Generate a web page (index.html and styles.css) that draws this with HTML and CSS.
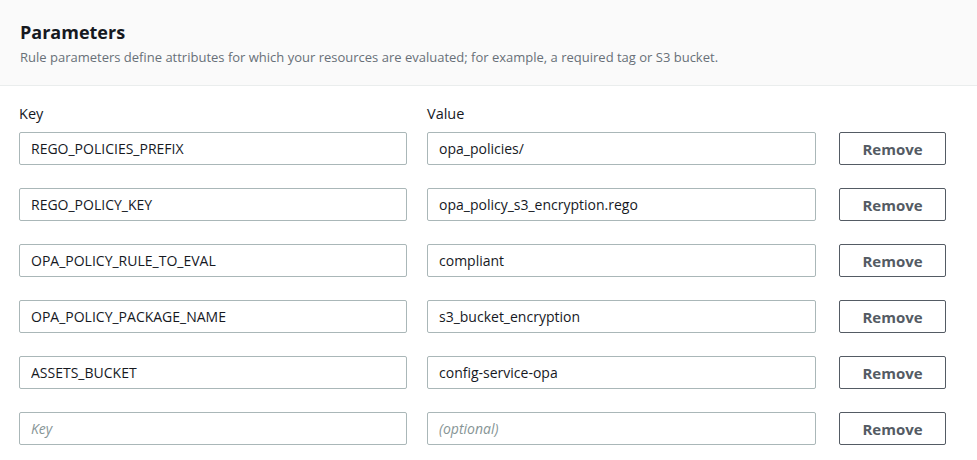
FILE: index.html
```html
<!DOCTYPE html>
<html>

<head>
    <title>Parameters</title>
    <link rel="stylesheet" href="styles.css">
</head>

<body>
    <div class="panel">
        <div class="panel-header">
            <h2>Parameters</h2>
            <p>Rule parameters define attributes for which your resources are evaluated; for example, a required tag or S3 bucket.</p>
        </div>
        <div class="panel-body">
            <div class="labels">
                <span>Key</span>
                <span>Value</span>
                <span></span>
            </div>
            <div class="param-row">
                <input type="text" value="REGO_POLICIES_PREFIX">
                <input type="text" value="opa_policies/">
                <button>Remove</button>
            </div>
            <div class="param-row">
                <input type="text" value="REGO_POLICY_KEY">
                <input type="text" value="opa_policy_s3_encryption.rego">
                <button>Remove</button>
            </div>
            <div class="param-row">
                <input type="text" value="OPA_POLICY_RULE_TO_EVAL">
                <input type="text" value="compliant">
                <button>Remove</button>
            </div>
            <div class="param-row">
                <input type="text" value="OPA_POLICY_PACKAGE_NAME">
                <input type="text" value="s3_bucket_encryption">
                <button>Remove</button>
            </div>
            <div class="param-row">
                <input type="text" value="ASSETS_BUCKET">
                <input type="text" value="config-service-opa">
                <button>Remove</button>
            </div>
            <div class="param-row">
                <input type="text" placeholder="Key">
                <input type="text" placeholder="(optional)">
                <button>Remove</button>
            </div>
        </div>
    </div>
</body>

</html>
```

FILE: styles.css
```css
body {
    margin: 0;
    font-family: "Open Sans", "Noto Sans", Arial, sans-serif;
    color: #16191f;
    background: #ffffff;
}

.panel-header {
    background: #fafafa;
    border-bottom: 1px solid #eaeded;
    padding: 19px 20px 0 20px;
    height: 66px;
}

.panel-header h2 {
    margin: 0;
    font-size: 18px;
    font-weight: 700;
    line-height: 26px;
}

.panel-header p {
    margin: 4px 0 0 0;
    font-size: 13px;
    line-height: 16px;
    color: #687078;
}

.panel-body {
    padding: 18px 20px 0 19px;
}

.labels,
.param-row {
    display: grid;
    grid-template-columns: 388px 389px 110px;
    column-gap: 20px;
    align-items: center;
}

.labels {
    font-size: 14.5px;
    line-height: 20px;
    margin-bottom: 8px;
}

.param-row {
    margin-bottom: 23px;
}

.param-row button {
    margin-left: 3px;
}

input[type="text"] {
    box-sizing: border-box;
    height: 33px;
    padding: 0 11px;
    font-family: inherit;
    font-size: 14px;
    color: #16191f;
    border: 1px solid #aab7b8;
    border-radius: 2px;
    background: #ffffff;
}

input::placeholder {
    color: #879596;
    font-style: italic;
}

button {
    box-sizing: border-box;
    height: 33px;
    padding: 0;
    font-family: inherit;
    font-size: 15px;
    line-height: 20px;
    font-weight: 700;
    color: #545b64;
    background: #ffffff;
    border: 1px solid #545b64;
    border-radius: 2px;
    cursor: pointer;
}
```
